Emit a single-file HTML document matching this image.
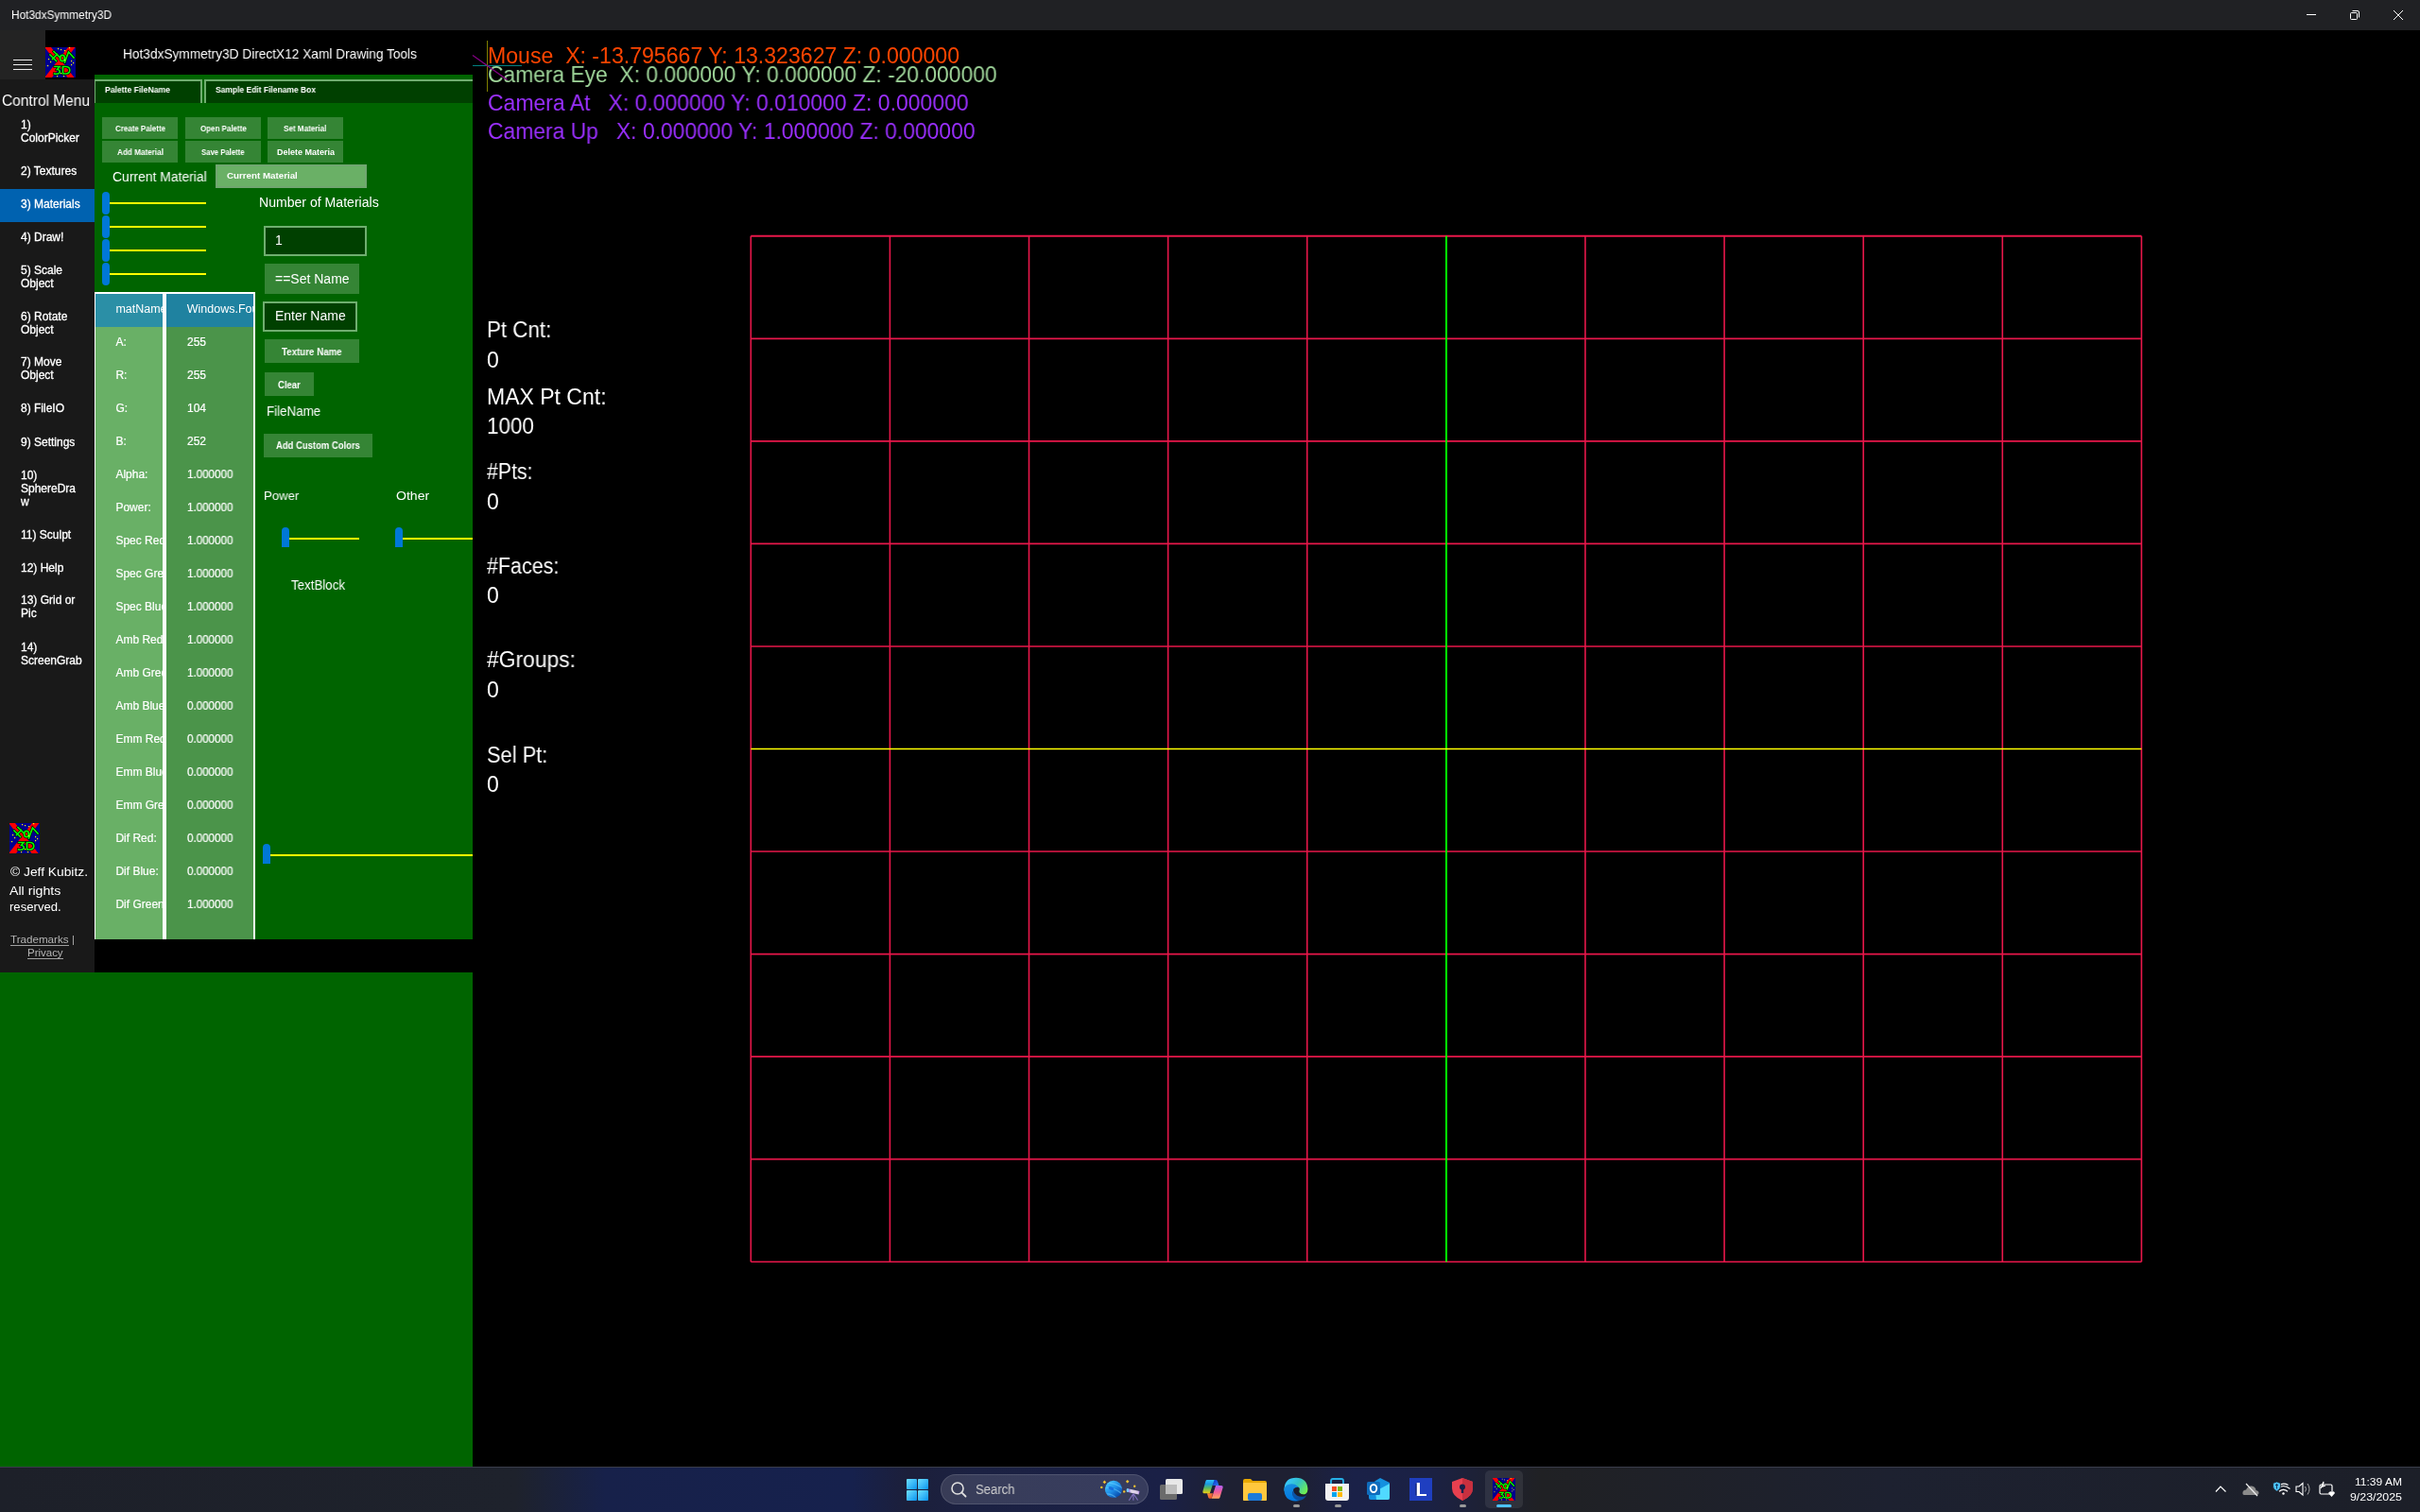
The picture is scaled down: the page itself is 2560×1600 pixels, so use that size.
<!DOCTYPE html>
<html><head><meta charset="utf-8"><title>Hot3dxSymmetry3D</title>
<style>
html,body{margin:0;padding:0;background:#000;width:2560px;height:1600px;overflow:hidden;}
body{position:relative;font-family:"Liberation Sans", sans-serif;}
body div{position:absolute;}
span{display:inline-block;}
.t{will-change:transform;}
</style></head><body>
<div style="left:0px;top:0px;width:2560px;height:32px;background:#202124;"></div>
<div class="t" style="left:12px;top:9.84px;font-size:12px;line-height:12px;color:#ffffff;white-space:pre;transform:scaleX(0.9872);transform-origin:0 0;"><span id="t1">Hot3dxSymmetry3D</span></div>
<svg style="position:absolute;left:2420px;top:0px" width="140" height="32" viewBox="2420 0 140 32">
<path d="M2440 15.5 H2450" stroke="#fff" stroke-width="1"/>
<rect x="2486.5" y="13.5" width="7" height="7" rx="1" fill="none" stroke="#fff" stroke-width="1"/>
<path d="M2488.5 11.5 H2494 Q2495.5 11.5 2495.5 13 V18.5" fill="none" stroke="#fff" stroke-width="1"/>
<path d="M2532 11 L2542 21 M2542 11 L2532 21" stroke="#fff" stroke-width="1"/>
</svg>
<div style="left:0px;top:32px;width:48px;height:52px;background:#232323;"></div>
<div style="left:14px;top:63px;width:20px;height:1.2px;background:#f0f0f0;"></div>
<div style="left:14px;top:68px;width:20px;height:1.2px;background:#f0f0f0;"></div>
<div style="left:14px;top:73px;width:20px;height:1.2px;background:#f0f0f0;"></div>
<svg style="position:absolute;left:48px;top:50px" width="32" height="32" viewBox="0 0 32 32">
<rect width="32" height="32" fill="#000090"/>
<path d="M0 0 H6 L30.5 32 H23.5 L0 1 Z" fill="#ff0000"/>
<path d="M24 0 H31.5 L7 32 H0 V31 Z" fill="#ff0000"/>
<g fill="none" stroke-linecap="square">
<path d="M5 8 L11.5 14.5 M9 4.5 L15 10.5 M7.5 12.5 L12.5 7.5 M21.5 13 L24.5 5 L30 11 M20.5 16 L23 9 M10 20.5 H15 L12.5 23.5 Q16 24 15 27 Q13.5 28.8 9.5 28 M18.5 20.5 V28 H22 Q25.8 27.5 25.8 24.2 Q25.8 20.8 22 20.5 Z" stroke="#000" stroke-width="3"/>
<ellipse cx="18" cy="11.5" rx="2.4" ry="3.2" stroke="#000" stroke-width="3"/>
<path d="M5 8 L11.5 14.5 M9 4.5 L15 10.5 M7.5 12.5 L12.5 7.5 M21.5 13 L24.5 5 L30 11 M20.5 16 L23 9 M10 20.5 H15 L12.5 23.5 Q16 24 15 27 Q13.5 28.8 9.5 28 M18.5 20.5 V28 H22 Q25.8 27.5 25.8 24.2 Q25.8 20.8 22 20.5 Z" stroke="#00ff00" stroke-width="1.7"/>
<ellipse cx="18" cy="11.5" rx="2.4" ry="3.2" stroke="#00ff00" stroke-width="1.7"/>
</g>
<g fill="#ffff00"><rect x="13" y="1" width="1.2" height="1.2"/><rect x="16" y="2" width="1.2" height="1.2"/><rect x="25" y="0" width="1.2" height="1.2"/><rect x="20" y="3" width="1.2" height="1.2"/><rect x="3" y="12" width="1.2" height="1.2"/><rect x="5" y="15" width="1.2" height="1.2"/><rect x="2" y="19" width="1.2" height="1.2"/><rect x="20" y="13" width="1.2" height="1.2"/><rect x="27" y="14" width="1.2" height="1.2"/><rect x="29" y="16" width="1.2" height="1.2"/><rect x="27" y="18" width="1.2" height="1.2"/><rect x="16" y="27" width="1.2" height="1.2"/><rect x="12" y="30" width="1.2" height="1.2"/><rect x="19" y="30" width="1.2" height="1.2"/></g>
</svg>
<div class="t" style="left:130px;top:49.73px;font-size:14.5px;line-height:14.5px;color:#ffffff;white-space:pre;transform:scaleX(0.9443);transform-origin:0 0;"><span id="t2">Hot3dxSymmetry3D DirectX12 Xaml Drawing Tools</span></div>
<div style="left:0px;top:84px;width:100px;height:945px;background:#191919;"></div>
<div class="t" style="left:2px;top:99.46px;font-size:16px;line-height:16px;color:#ffffff;white-space:pre;transform:scaleX(0.9683);transform-origin:0 0;"><span id="t3">Control Menu</span></div>
<div style="left:0px;top:200px;width:100px;height:35px;background:#0062b0;"></div>
<div class="t" style="left:21.5px;top:126.04px;font-size:12px;line-height:12px;color:#ffffff;white-space:pre;-webkit-text-stroke:0.3px #fff;"><span id="t4">1)</span></div>
<div class="t" style="left:21.5px;top:139.94px;font-size:12px;line-height:12px;color:#ffffff;white-space:pre;-webkit-text-stroke:0.3px #fff;"><span id="t5">ColorPicker</span></div>
<div class="t" style="left:21.5px;top:175.14px;font-size:12px;line-height:12px;color:#ffffff;white-space:pre;-webkit-text-stroke:0.3px #fff;"><span id="t6">2) Textures</span></div>
<div class="t" style="left:21.5px;top:210.04px;font-size:12px;line-height:12px;color:#ffffff;white-space:pre;-webkit-text-stroke:0.3px #fff;"><span id="t7">3) Materials</span></div>
<div class="t" style="left:21.5px;top:244.84px;font-size:12px;line-height:12px;color:#ffffff;white-space:pre;-webkit-text-stroke:0.3px #fff;"><span id="t8">4) Draw!</span></div>
<div class="t" style="left:21.5px;top:279.84px;font-size:12px;line-height:12px;color:#ffffff;white-space:pre;-webkit-text-stroke:0.3px #fff;"><span id="t9">5) Scale</span></div>
<div class="t" style="left:21.5px;top:293.74px;font-size:12px;line-height:12px;color:#ffffff;white-space:pre;-webkit-text-stroke:0.3px #fff;"><span id="t10">Object</span></div>
<div class="t" style="left:21.5px;top:328.84px;font-size:12px;line-height:12px;color:#ffffff;white-space:pre;-webkit-text-stroke:0.3px #fff;"><span id="t11">6) Rotate</span></div>
<div class="t" style="left:21.5px;top:342.74px;font-size:12px;line-height:12px;color:#ffffff;white-space:pre;-webkit-text-stroke:0.3px #fff;"><span id="t12">Object</span></div>
<div class="t" style="left:21.5px;top:377.24px;font-size:12px;line-height:12px;color:#ffffff;white-space:pre;-webkit-text-stroke:0.3px #fff;"><span id="t13">7) Move</span></div>
<div class="t" style="left:21.5px;top:391.14px;font-size:12px;line-height:12px;color:#ffffff;white-space:pre;-webkit-text-stroke:0.3px #fff;"><span id="t14">Object</span></div>
<div class="t" style="left:21.5px;top:426.34px;font-size:12px;line-height:12px;color:#ffffff;white-space:pre;-webkit-text-stroke:0.3px #fff;"><span id="t15">8) FileIO</span></div>
<div class="t" style="left:21.5px;top:461.84px;font-size:12px;line-height:12px;color:#ffffff;white-space:pre;-webkit-text-stroke:0.3px #fff;"><span id="t16">9) Settings</span></div>
<div class="t" style="left:21.5px;top:496.74px;font-size:12px;line-height:12px;color:#ffffff;white-space:pre;-webkit-text-stroke:0.3px #fff;"><span id="t17">10)</span></div>
<div class="t" style="left:21.5px;top:510.64px;font-size:12px;line-height:12px;color:#ffffff;white-space:pre;-webkit-text-stroke:0.3px #fff;"><span id="t18">SphereDra</span></div>
<div class="t" style="left:21.5px;top:524.54px;font-size:12px;line-height:12px;color:#ffffff;white-space:pre;-webkit-text-stroke:0.3px #fff;"><span id="t19">w</span></div>
<div class="t" style="left:21.5px;top:559.84px;font-size:12px;line-height:12px;color:#ffffff;white-space:pre;-webkit-text-stroke:0.3px #fff;"><span id="t20">11) Sculpt</span></div>
<div class="t" style="left:21.5px;top:594.74px;font-size:12px;line-height:12px;color:#ffffff;white-space:pre;-webkit-text-stroke:0.3px #fff;"><span id="t21">12) Help</span></div>
<div class="t" style="left:21.5px;top:629.44px;font-size:12px;line-height:12px;color:#ffffff;white-space:pre;-webkit-text-stroke:0.3px #fff;"><span id="t22">13) Grid or</span></div>
<div class="t" style="left:21.5px;top:643.34px;font-size:12px;line-height:12px;color:#ffffff;white-space:pre;-webkit-text-stroke:0.3px #fff;"><span id="t23">Pic</span></div>
<div class="t" style="left:21.5px;top:678.74px;font-size:12px;line-height:12px;color:#ffffff;white-space:pre;-webkit-text-stroke:0.3px #fff;"><span id="t24">14)</span></div>
<div class="t" style="left:21.5px;top:692.64px;font-size:12px;line-height:12px;color:#ffffff;white-space:pre;-webkit-text-stroke:0.3px #fff;"><span id="t25">ScreenGrab</span></div>
<svg style="position:absolute;left:10px;top:871px" width="32" height="32" viewBox="0 0 32 32">
<rect width="32" height="32" fill="#000090"/>
<path d="M0 0 H6 L30.5 32 H23.5 L0 1 Z" fill="#ff0000"/>
<path d="M24 0 H31.5 L7 32 H0 V31 Z" fill="#ff0000"/>
<g fill="none" stroke-linecap="square">
<path d="M5 8 L11.5 14.5 M9 4.5 L15 10.5 M7.5 12.5 L12.5 7.5 M21.5 13 L24.5 5 L30 11 M20.5 16 L23 9 M10 20.5 H15 L12.5 23.5 Q16 24 15 27 Q13.5 28.8 9.5 28 M18.5 20.5 V28 H22 Q25.8 27.5 25.8 24.2 Q25.8 20.8 22 20.5 Z" stroke="#000" stroke-width="3"/>
<ellipse cx="18" cy="11.5" rx="2.4" ry="3.2" stroke="#000" stroke-width="3"/>
<path d="M5 8 L11.5 14.5 M9 4.5 L15 10.5 M7.5 12.5 L12.5 7.5 M21.5 13 L24.5 5 L30 11 M20.5 16 L23 9 M10 20.5 H15 L12.5 23.5 Q16 24 15 27 Q13.5 28.8 9.5 28 M18.5 20.5 V28 H22 Q25.8 27.5 25.8 24.2 Q25.8 20.8 22 20.5 Z" stroke="#00ff00" stroke-width="1.7"/>
<ellipse cx="18" cy="11.5" rx="2.4" ry="3.2" stroke="#00ff00" stroke-width="1.7"/>
</g>
<g fill="#ffff00"><rect x="13" y="1" width="1.2" height="1.2"/><rect x="16" y="2" width="1.2" height="1.2"/><rect x="25" y="0" width="1.2" height="1.2"/><rect x="20" y="3" width="1.2" height="1.2"/><rect x="3" y="12" width="1.2" height="1.2"/><rect x="5" y="15" width="1.2" height="1.2"/><rect x="2" y="19" width="1.2" height="1.2"/><rect x="20" y="13" width="1.2" height="1.2"/><rect x="27" y="14" width="1.2" height="1.2"/><rect x="29" y="16" width="1.2" height="1.2"/><rect x="27" y="18" width="1.2" height="1.2"/><rect x="16" y="27" width="1.2" height="1.2"/><rect x="12" y="30" width="1.2" height="1.2"/><rect x="19" y="30" width="1.2" height="1.2"/></g>
</svg>
<div class="t" style="left:10.6px;top:916.30px;font-size:13px;line-height:13px;color:#ffffff;white-space:pre;transform:scaleX(1.0613);transform-origin:0 0;"><span id="t26">© Jeff Kubitz.</span></div>
<div class="t" style="left:10.3px;top:935.50px;font-size:13px;line-height:13px;color:#ffffff;white-space:pre;transform:scaleX(1.0911);transform-origin:0 0;"><span id="t27">All rights</span></div>
<div class="t" style="left:10.3px;top:953.30px;font-size:13px;line-height:13px;color:#ffffff;white-space:pre;transform:scaleX(1.0092);transform-origin:0 0;"><span id="t28">reserved.</span></div>
<div class="t" style="left:11.2px;top:989.39px;font-size:11px;line-height:11px;color:#b4b4b4;white-space:pre;transform:scaleX(1.0569);transform-origin:0 0;"><span id="t29">Trademarks</span></div>
<div style="left:11px;top:1000.2px;width:62px;height:1px;background:#a0a0a0;"></div>
<div class="t" style="left:75.5px;top:989.39px;font-size:11px;line-height:11px;color:#b4b4b4;white-space:pre;"><span id="t30">|</span></div>
<div class="t" style="left:29.4px;top:1002.69px;font-size:11px;line-height:11px;color:#b4b4b4;white-space:pre;transform:scaleX(1.0426);transform-origin:0 0;"><span id="t31">Privacy</span></div>
<div style="left:29px;top:1014.2px;width:38px;height:1px;background:#a0a0a0;"></div>
<div style="left:100px;top:79px;width:400px;height:915px;background:#006400;"></div>
<div style="left:0px;top:1029px;width:500px;height:523px;background:#006400;"></div>
<div style="left:100px;top:84px;width:114px;height:25px;background:#004000;border-top:2px solid #6fae6f;border-left:1.5px solid #6fae6f;border-right:2px solid #6fae6f;box-sizing:border-box;"></div>
<div class="t" style="left:111px;top:91.38px;font-size:9px;line-height:9px;color:#ffffff;white-space:pre;font-weight:700;transform:scaleX(0.9579);transform-origin:0 0;"><span id="t32">Palette FileName</span></div>
<div style="left:216px;top:84px;width:284px;height:25px;background:#004000;border-top:2px solid #6fae6f;border-left:2px solid #6fae6f;box-sizing:border-box;"></div>
<div class="t" style="left:227.8px;top:91.38px;font-size:9px;line-height:9px;color:#ffffff;white-space:pre;font-weight:700;transform:scaleX(0.9420);transform-origin:0 0;"><span id="t33">Sample Edit Filename Box</span></div>
<div style="left:108px;top:124px;width:80px;height:23px;background:#358535;"></div>
<div style="left:108px;top:149px;width:80px;height:23px;background:#358535;"></div>
<div style="left:196px;top:124px;width:80px;height:23px;background:#358535;"></div>
<div style="left:196px;top:149px;width:80px;height:23px;background:#358535;"></div>
<div style="left:283px;top:124px;width:80px;height:23px;background:#358535;"></div>
<div style="left:283px;top:149px;width:80px;height:23px;background:#358535;"></div>
<div class="t" style="left:121.9px;top:132.00px;font-size:8.5px;line-height:8.5px;color:#ffffff;white-space:pre;font-weight:700;transform:scaleX(0.9347);transform-origin:0 0;"><span id="t34">Create Palette</span></div>
<div class="t" style="left:211.9px;top:131.70px;font-size:8.5px;line-height:8.5px;color:#ffffff;white-space:pre;font-weight:700;transform:scaleX(0.9390);transform-origin:0 0;"><span id="t35">Open Palette</span></div>
<div class="t" style="left:300px;top:131.70px;font-size:8.5px;line-height:8.5px;color:#ffffff;white-space:pre;font-weight:700;transform:scaleX(0.9514);transform-origin:0 0;"><span id="t36">Set Material</span></div>
<div class="t" style="left:124px;top:156.50px;font-size:8.5px;line-height:8.5px;color:#ffffff;white-space:pre;font-weight:700;transform:scaleX(0.9585);transform-origin:0 0;"><span id="t37">Add Material</span></div>
<div class="t" style="left:213px;top:156.60px;font-size:8.5px;line-height:8.5px;color:#ffffff;white-space:pre;font-weight:700;transform:scaleX(0.9103);transform-origin:0 0;"><span id="t38">Save Palette</span></div>
<div class="t" style="left:288px;top:153.28px;width:65.5px;height:19px;overflow:hidden;"><div style="left:5px;top:4px;font-size:9px;line-height:9px;color:#ffffff;white-space:pre;font-weight:700;"><span id="t39">Delete Material</span></div></div>
<div class="t" style="left:119.3px;top:179.75px;font-size:14px;line-height:14px;color:#ffffff;white-space:pre;transform:scaleX(0.9933);transform-origin:0 0;"><span id="t40">Current Material</span></div>
<div style="left:228px;top:174px;width:160px;height:25px;background:#6ab066;border:2px solid #70a670;box-sizing:border-box;"></div>
<div class="t" style="left:240.2px;top:180.96px;font-size:9.5px;line-height:9.5px;color:#ffffff;white-space:pre;font-weight:700;transform:scaleX(1.0266);transform-origin:0 0;"><span id="t41">Current Material</span></div>
<div style="left:116px;top:214px;width:102px;height:2px;background:#ffff00;"></div>
<div style="left:108px;top:203px;width:8px;height:24px;background:#0078d7;border-radius:4px;"></div>
<div style="left:116px;top:239px;width:102px;height:2px;background:#ffff00;"></div>
<div style="left:108px;top:228px;width:8px;height:24px;background:#0078d7;border-radius:4px;"></div>
<div style="left:116px;top:264px;width:102px;height:2px;background:#ffff00;"></div>
<div style="left:108px;top:253px;width:8px;height:24px;background:#0078d7;border-radius:4px;"></div>
<div style="left:116px;top:289px;width:102px;height:2px;background:#ffff00;"></div>
<div style="left:108px;top:278px;width:8px;height:24px;background:#0078d7;border-radius:4px;"></div>
<div class="t" style="left:273.5px;top:206.95px;font-size:14px;line-height:14px;color:#ffffff;white-space:pre;transform:scaleX(1.0052);transform-origin:0 0;"><span id="t42">Number of Materials</span></div>
<div style="left:279px;top:239px;width:109px;height:32px;background:#004000;border:2px solid #6fae6f;box-sizing:border-box;"></div>
<div class="t" style="left:290.7px;top:246.95px;font-size:14px;line-height:14px;color:#ffffff;white-space:pre;"><span id="t43">1</span></div>
<div style="left:280px;top:279px;width:100px;height:32px;background:#358535;"></div>
<div class="t" style="left:290.7px;top:288.15px;font-size:14px;line-height:14px;color:#ffffff;white-space:pre;transform:scaleX(0.9961);transform-origin:0 0;"><span id="t44">==Set Name</span></div>
<div style="left:278px;top:319px;width:100px;height:32px;background:#004000;border:2px solid #6fae6f;box-sizing:border-box;"></div>
<div class="t" style="left:290.7px;top:326.85px;font-size:14px;line-height:14px;color:#ffffff;white-space:pre;transform:scaleX(0.9986);transform-origin:0 0;"><span id="t45">Enter Name</span></div>
<div style="left:280px;top:359px;width:100px;height:25px;background:#358535;"></div>
<div class="t" style="left:298px;top:367.54px;font-size:10px;line-height:10px;color:#ffffff;white-space:pre;font-weight:700;transform:scaleX(0.9724);transform-origin:0 0;"><span id="t46">Texture Name</span></div>
<div style="left:280px;top:394px;width:52px;height:25px;background:#358535;"></div>
<div class="t" style="left:293.9px;top:402.54px;font-size:10px;line-height:10px;color:#ffffff;white-space:pre;font-weight:700;transform:scaleX(0.9514);transform-origin:0 0;"><span id="t47">Clear</span></div>
<div class="t" style="left:282.4px;top:427.85px;font-size:14px;line-height:14px;color:#ffffff;white-space:pre;transform:scaleX(0.9548);transform-origin:0 0;"><span id="t48">FileName</span></div>
<div style="left:279px;top:459px;width:115px;height:25px;background:#358535;"></div>
<div class="t" style="left:292.3px;top:467.24px;font-size:10px;line-height:10px;color:#ffffff;white-space:pre;font-weight:700;transform:scaleX(0.9468);transform-origin:0 0;"><span id="t49">Add Custom Colors</span></div>
<div class="t" style="left:278.6px;top:517.57px;font-size:13.5px;line-height:13.5px;color:#ffffff;white-space:pre;transform:scaleX(0.9774);transform-origin:0 0;"><span id="t50">Power</span></div>
<div class="t" style="left:419.2px;top:518.37px;font-size:13.5px;line-height:13.5px;color:#ffffff;white-space:pre;transform:scaleX(1.0425);transform-origin:0 0;"><span id="t51">Other</span></div>
<div style="left:306px;top:569px;width:74px;height:2px;background:#ffff00;"></div>
<div style="left:298px;top:558px;width:8px;height:21px;background:#0078d7;border-radius:4px 4px 0 0;"></div>
<div style="left:426px;top:569px;width:74px;height:2px;background:#ffff00;"></div>
<div style="left:418px;top:558px;width:8px;height:21px;background:#0078d7;border-radius:4px 4px 0 0;"></div>
<div class="t" style="left:308.3px;top:612.15px;font-size:14px;line-height:14px;color:#ffffff;white-space:pre;transform:scaleX(0.9512);transform-origin:0 0;"><span id="t52">TextBlock</span></div>
<div style="left:286px;top:904px;width:214px;height:2px;background:#ffff00;"></div>
<div style="left:278px;top:893px;width:8px;height:21px;background:#0078d7;border-radius:4px 4px 0 0;"></div>
<div style="left:100px;top:309px;width:170px;height:685px;background:#ffffff;"></div>
<div style="left:101px;top:311px;width:71px;height:35px;background:#2b8fa6;"></div>
<div style="left:176px;top:311px;width:92px;height:35px;background:#1f82a0;"></div>
<div style="left:101px;top:346px;width:71px;height:648px;background:#69b066;"></div>
<div style="left:176px;top:346px;width:92px;height:648px;background:#4b944a;"></div>
<div class="t" style="left:101px;top:317.42px;width:71px;height:22.5px;overflow:hidden;"><div style="left:21.400000000000006px;top:4px;font-size:12.5px;line-height:12.5px;color:#ffffff;white-space:pre;"><span id="t53">matName</span></div></div>
<div class="t" style="left:176px;top:317.42px;width:92px;height:22.5px;overflow:hidden;"><div style="left:21.80000000000001px;top:4px;font-size:12.5px;line-height:12.5px;color:#ffffff;white-space:pre;"><span id="t54">Windows.Foundation.String</span></div></div>
<div class="t" style="left:101px;top:351.54px;width:71px;height:22px;overflow:hidden;"><div style="left:21.400000000000006px;top:4px;font-size:12px;line-height:12px;color:#ffffff;white-space:pre;-webkit-text-stroke:0.2px #fff;"><span id="t55">A:</span></div></div>
<div class="t" style="left:197.8px;top:355.54px;font-size:12px;line-height:12px;color:#ffffff;white-space:pre;-webkit-text-stroke:0.2px #fff;"><span id="t56">255</span></div>
<div class="t" style="left:101px;top:386.54px;width:71px;height:22px;overflow:hidden;"><div style="left:21.400000000000006px;top:4px;font-size:12px;line-height:12px;color:#ffffff;white-space:pre;-webkit-text-stroke:0.2px #fff;"><span id="t57">R:</span></div></div>
<div class="t" style="left:197.8px;top:390.54px;font-size:12px;line-height:12px;color:#ffffff;white-space:pre;-webkit-text-stroke:0.2px #fff;"><span id="t58">255</span></div>
<div class="t" style="left:101px;top:421.54px;width:71px;height:22px;overflow:hidden;"><div style="left:21.400000000000006px;top:4px;font-size:12px;line-height:12px;color:#ffffff;white-space:pre;-webkit-text-stroke:0.2px #fff;"><span id="t59">G:</span></div></div>
<div class="t" style="left:197.8px;top:425.54px;font-size:12px;line-height:12px;color:#ffffff;white-space:pre;-webkit-text-stroke:0.2px #fff;"><span id="t60">104</span></div>
<div class="t" style="left:101px;top:456.54px;width:71px;height:22px;overflow:hidden;"><div style="left:21.400000000000006px;top:4px;font-size:12px;line-height:12px;color:#ffffff;white-space:pre;-webkit-text-stroke:0.2px #fff;"><span id="t61">B:</span></div></div>
<div class="t" style="left:197.8px;top:460.54px;font-size:12px;line-height:12px;color:#ffffff;white-space:pre;-webkit-text-stroke:0.2px #fff;"><span id="t62">252</span></div>
<div class="t" style="left:101px;top:491.54px;width:71px;height:22px;overflow:hidden;"><div style="left:21.400000000000006px;top:4px;font-size:12px;line-height:12px;color:#ffffff;white-space:pre;-webkit-text-stroke:0.2px #fff;"><span id="t63">Alpha:</span></div></div>
<div class="t" style="left:197.8px;top:495.54px;font-size:12px;line-height:12px;color:#ffffff;white-space:pre;transform:scaleX(0.9668);transform-origin:0 0;-webkit-text-stroke:0.2px #fff;"><span id="t64">1.000000</span></div>
<div class="t" style="left:101px;top:526.54px;width:71px;height:22px;overflow:hidden;"><div style="left:21.400000000000006px;top:4px;font-size:12px;line-height:12px;color:#ffffff;white-space:pre;-webkit-text-stroke:0.2px #fff;"><span id="t65">Power:</span></div></div>
<div class="t" style="left:197.8px;top:530.54px;font-size:12px;line-height:12px;color:#ffffff;white-space:pre;transform:scaleX(0.9668);transform-origin:0 0;-webkit-text-stroke:0.2px #fff;"><span id="t66">1.000000</span></div>
<div class="t" style="left:101px;top:561.54px;width:71px;height:22px;overflow:hidden;"><div style="left:21.400000000000006px;top:4px;font-size:12px;line-height:12px;color:#ffffff;white-space:pre;-webkit-text-stroke:0.2px #fff;"><span id="t67">Spec Red:</span></div></div>
<div class="t" style="left:197.8px;top:565.54px;font-size:12px;line-height:12px;color:#ffffff;white-space:pre;transform:scaleX(0.9668);transform-origin:0 0;-webkit-text-stroke:0.2px #fff;"><span id="t68">1.000000</span></div>
<div class="t" style="left:101px;top:596.54px;width:71px;height:22px;overflow:hidden;"><div style="left:21.400000000000006px;top:4px;font-size:12px;line-height:12px;color:#ffffff;white-space:pre;-webkit-text-stroke:0.2px #fff;"><span id="t69">Spec Green:</span></div></div>
<div class="t" style="left:197.8px;top:600.54px;font-size:12px;line-height:12px;color:#ffffff;white-space:pre;transform:scaleX(0.9668);transform-origin:0 0;-webkit-text-stroke:0.2px #fff;"><span id="t70">1.000000</span></div>
<div class="t" style="left:101px;top:631.54px;width:71px;height:22px;overflow:hidden;"><div style="left:21.400000000000006px;top:4px;font-size:12px;line-height:12px;color:#ffffff;white-space:pre;-webkit-text-stroke:0.2px #fff;"><span id="t71">Spec Blue:</span></div></div>
<div class="t" style="left:197.8px;top:635.54px;font-size:12px;line-height:12px;color:#ffffff;white-space:pre;transform:scaleX(0.9668);transform-origin:0 0;-webkit-text-stroke:0.2px #fff;"><span id="t72">1.000000</span></div>
<div class="t" style="left:101px;top:666.54px;width:71px;height:22px;overflow:hidden;"><div style="left:21.400000000000006px;top:4px;font-size:12px;line-height:12px;color:#ffffff;white-space:pre;-webkit-text-stroke:0.2px #fff;"><span id="t73">Amb Red:</span></div></div>
<div class="t" style="left:197.8px;top:670.54px;font-size:12px;line-height:12px;color:#ffffff;white-space:pre;transform:scaleX(0.9668);transform-origin:0 0;-webkit-text-stroke:0.2px #fff;"><span id="t74">1.000000</span></div>
<div class="t" style="left:101px;top:701.54px;width:71px;height:22px;overflow:hidden;"><div style="left:21.400000000000006px;top:4px;font-size:12px;line-height:12px;color:#ffffff;white-space:pre;-webkit-text-stroke:0.2px #fff;"><span id="t75">Amb Green:</span></div></div>
<div class="t" style="left:197.8px;top:705.54px;font-size:12px;line-height:12px;color:#ffffff;white-space:pre;transform:scaleX(0.9668);transform-origin:0 0;-webkit-text-stroke:0.2px #fff;"><span id="t76">1.000000</span></div>
<div class="t" style="left:101px;top:736.54px;width:71px;height:22px;overflow:hidden;"><div style="left:21.400000000000006px;top:4px;font-size:12px;line-height:12px;color:#ffffff;white-space:pre;-webkit-text-stroke:0.2px #fff;"><span id="t77">Amb Blue:</span></div></div>
<div class="t" style="left:197.8px;top:740.54px;font-size:12px;line-height:12px;color:#ffffff;white-space:pre;transform:scaleX(0.9668);transform-origin:0 0;-webkit-text-stroke:0.2px #fff;"><span id="t78">0.000000</span></div>
<div class="t" style="left:101px;top:771.54px;width:71px;height:22px;overflow:hidden;"><div style="left:21.400000000000006px;top:4px;font-size:12px;line-height:12px;color:#ffffff;white-space:pre;-webkit-text-stroke:0.2px #fff;"><span id="t79">Emm Red:</span></div></div>
<div class="t" style="left:197.8px;top:775.54px;font-size:12px;line-height:12px;color:#ffffff;white-space:pre;transform:scaleX(0.9668);transform-origin:0 0;-webkit-text-stroke:0.2px #fff;"><span id="t80">0.000000</span></div>
<div class="t" style="left:101px;top:806.54px;width:71px;height:22px;overflow:hidden;"><div style="left:21.400000000000006px;top:4px;font-size:12px;line-height:12px;color:#ffffff;white-space:pre;-webkit-text-stroke:0.2px #fff;"><span id="t81">Emm Blue:</span></div></div>
<div class="t" style="left:197.8px;top:810.54px;font-size:12px;line-height:12px;color:#ffffff;white-space:pre;transform:scaleX(0.9668);transform-origin:0 0;-webkit-text-stroke:0.2px #fff;"><span id="t82">0.000000</span></div>
<div class="t" style="left:101px;top:841.54px;width:71px;height:22px;overflow:hidden;"><div style="left:21.400000000000006px;top:4px;font-size:12px;line-height:12px;color:#ffffff;white-space:pre;-webkit-text-stroke:0.2px #fff;"><span id="t83">Emm Green:</span></div></div>
<div class="t" style="left:197.8px;top:845.54px;font-size:12px;line-height:12px;color:#ffffff;white-space:pre;transform:scaleX(0.9668);transform-origin:0 0;-webkit-text-stroke:0.2px #fff;"><span id="t84">0.000000</span></div>
<div class="t" style="left:101px;top:876.54px;width:71px;height:22px;overflow:hidden;"><div style="left:21.400000000000006px;top:4px;font-size:12px;line-height:12px;color:#ffffff;white-space:pre;-webkit-text-stroke:0.2px #fff;"><span id="t85">Dif Red:</span></div></div>
<div class="t" style="left:197.8px;top:880.54px;font-size:12px;line-height:12px;color:#ffffff;white-space:pre;transform:scaleX(0.9668);transform-origin:0 0;-webkit-text-stroke:0.2px #fff;"><span id="t86">0.000000</span></div>
<div class="t" style="left:101px;top:911.54px;width:71px;height:22px;overflow:hidden;"><div style="left:21.400000000000006px;top:4px;font-size:12px;line-height:12px;color:#ffffff;white-space:pre;-webkit-text-stroke:0.2px #fff;"><span id="t87">Dif Blue:</span></div></div>
<div class="t" style="left:197.8px;top:915.54px;font-size:12px;line-height:12px;color:#ffffff;white-space:pre;transform:scaleX(0.9668);transform-origin:0 0;-webkit-text-stroke:0.2px #fff;"><span id="t88">0.000000</span></div>
<div class="t" style="left:101px;top:946.54px;width:71px;height:22px;overflow:hidden;"><div style="left:21.400000000000006px;top:4px;font-size:12px;line-height:12px;color:#ffffff;white-space:pre;-webkit-text-stroke:0.2px #fff;"><span id="t89">Dif Green:</span></div></div>
<div class="t" style="left:197.8px;top:950.54px;font-size:12px;line-height:12px;color:#ffffff;white-space:pre;transform:scaleX(0.9668);transform-origin:0 0;-webkit-text-stroke:0.2px #fff;"><span id="t90">1.000000</span></div>
<div class="t" style="left:516px;top:48.23px;font-size:23px;line-height:23px;color:#ff4500;white-space:pre;transform:scaleX(1.0040);transform-origin:0 0;"><span id="t91">Mouse  X: -13.795667 Y: 13.323627 Z: 0.000000</span></div>
<div class="t" style="left:515.5px;top:68.33px;font-size:23px;line-height:23px;color:#9fd69a;white-space:pre;transform:scaleX(0.9917);transform-origin:0 0;"><span id="t92">Camera Eye  X: 0.000000 Y: 0.000000 Z: -20.000000</span></div>
<div class="t" style="left:515.5px;top:98.23px;font-size:23px;line-height:23px;color:#9b30ff;white-space:pre;transform:scaleX(0.9975);transform-origin:0 0;"><span id="t93">Camera At   X: 0.000000 Y: 0.010000 Z: 0.000000</span></div>
<div class="t" style="left:515.5px;top:128.03px;font-size:23px;line-height:23px;color:#9b30ff;white-space:pre;transform:scaleX(0.9938);transform-origin:0 0;"><span id="t94">Camera Up   X: 0.000000 Y: 1.000000 Z: 0.000000</span></div>
<svg style="position:absolute;left:495px;top:38px" width="70" height="62" viewBox="495 38 70 62">
<path d="M515.5 43 V97" stroke="#808000" stroke-width="1"/>
<path d="M500 69.5 H552" stroke="#008080" stroke-width="1.2"/>
<path d="M500 58.5 L536.6 84.5" stroke="#800080" stroke-width="1.5"/>
</svg>
<div class="t" style="left:515px;top:338.33px;font-size:23px;line-height:23px;color:#ffffff;white-space:pre;transform:scaleX(0.9714);transform-origin:0 0;"><span id="t95">Pt Cnt:</span></div>
<div class="t" style="left:515px;top:369.53px;font-size:23px;line-height:23px;color:#ffffff;white-space:pre;"><span id="t96">0</span></div>
<div class="t" style="left:515px;top:408.53px;font-size:23px;line-height:23px;color:#ffffff;white-space:pre;transform:scaleX(0.9980);transform-origin:0 0;"><span id="t97">MAX Pt Cnt:</span></div>
<div class="t" style="left:515px;top:439.93px;font-size:23px;line-height:23px;color:#ffffff;white-space:pre;transform:scaleX(0.9771);transform-origin:0 0;"><span id="t98">1000</span></div>
<div class="t" style="left:515px;top:487.83px;font-size:23px;line-height:23px;color:#ffffff;white-space:pre;transform:scaleX(0.9252);transform-origin:0 0;"><span id="t99">#Pts:</span></div>
<div class="t" style="left:515px;top:519.53px;font-size:23px;line-height:23px;color:#ffffff;white-space:pre;"><span id="t100">0</span></div>
<div class="t" style="left:515px;top:587.93px;font-size:23px;line-height:23px;color:#ffffff;white-space:pre;transform:scaleX(0.9324);transform-origin:0 0;"><span id="t101">#Faces:</span></div>
<div class="t" style="left:515px;top:619.43px;font-size:23px;line-height:23px;color:#ffffff;white-space:pre;"><span id="t102">0</span></div>
<div class="t" style="left:515px;top:687.43px;font-size:23px;line-height:23px;color:#ffffff;white-space:pre;transform:scaleX(0.9925);transform-origin:0 0;"><span id="t103">#Groups:</span></div>
<div class="t" style="left:515px;top:719.43px;font-size:23px;line-height:23px;color:#ffffff;white-space:pre;"><span id="t104">0</span></div>
<div class="t" style="left:515px;top:787.93px;font-size:23px;line-height:23px;color:#ffffff;white-space:pre;transform:scaleX(0.9489);transform-origin:0 0;"><span id="t105">Sel Pt:</span></div>
<div class="t" style="left:515px;top:818.83px;font-size:23px;line-height:23px;color:#ffffff;white-space:pre;"><span id="t106">0</span></div>
<svg style="position:absolute;left:0;top:0" width="2560" height="1600"><line x1="794.30" y1="249.8" x2="794.30" y2="1335.2" stroke="#e8174a" stroke-width="1.6"/><line x1="941.41" y1="249.8" x2="941.41" y2="1335.2" stroke="#e8174a" stroke-width="1.6"/><line x1="1088.52" y1="249.8" x2="1088.52" y2="1335.2" stroke="#e8174a" stroke-width="1.6"/><line x1="1235.63" y1="249.8" x2="1235.63" y2="1335.2" stroke="#e8174a" stroke-width="1.6"/><line x1="1382.74" y1="249.8" x2="1382.74" y2="1335.2" stroke="#e8174a" stroke-width="1.6"/><line x1="1676.96" y1="249.8" x2="1676.96" y2="1335.2" stroke="#e8174a" stroke-width="1.6"/><line x1="1824.07" y1="249.8" x2="1824.07" y2="1335.2" stroke="#e8174a" stroke-width="1.6"/><line x1="1971.18" y1="249.8" x2="1971.18" y2="1335.2" stroke="#e8174a" stroke-width="1.6"/><line x1="2118.29" y1="249.8" x2="2118.29" y2="1335.2" stroke="#e8174a" stroke-width="1.6"/><line x1="2265.40" y1="249.8" x2="2265.40" y2="1335.2" stroke="#e8174a" stroke-width="1.6"/><line x1="794.3" y1="249.80" x2="2265.4" y2="249.80" stroke="#e8174a" stroke-width="2"/><line x1="794.3" y1="358.34" x2="2265.4" y2="358.34" stroke="#e8174a" stroke-width="1.6"/><line x1="794.3" y1="466.88" x2="2265.4" y2="466.88" stroke="#e8174a" stroke-width="1.6"/><line x1="794.3" y1="575.42" x2="2265.4" y2="575.42" stroke="#e8174a" stroke-width="1.6"/><line x1="794.3" y1="683.96" x2="2265.4" y2="683.96" stroke="#e8174a" stroke-width="1.6"/><line x1="794.3" y1="901.04" x2="2265.4" y2="901.04" stroke="#e8174a" stroke-width="1.6"/><line x1="794.3" y1="1009.58" x2="2265.4" y2="1009.58" stroke="#e8174a" stroke-width="1.6"/><line x1="794.3" y1="1118.12" x2="2265.4" y2="1118.12" stroke="#e8174a" stroke-width="1.6"/><line x1="794.3" y1="1226.66" x2="2265.4" y2="1226.66" stroke="#e8174a" stroke-width="1.6"/><line x1="794.3" y1="1335.20" x2="2265.4" y2="1335.20" stroke="#e8174a" stroke-width="1.6"/><line x1="1530" y1="249.8" x2="1530" y2="1335.2" stroke="#00ff00" stroke-width="2"/><line x1="794.3" y1="792.50" x2="2265.4" y2="792.50" stroke="#ffff00" stroke-width="1.4"/></svg>
<div style="left:0;top:1552px;width:2560px;height:48px;background:linear-gradient(90deg,#1d2029 0.0%,#1e222c 21.3%,#17214a 25.0%,#16214d 35.2%,#1c1f3a 37.5%,#1b2142 40.2%,#1a2046 48.0%,#1e2032 50.8%,#1e2032 53.5%,#1a2148 55.9%,#1b2144 59.0%,#202124 63.7%,#1d2130 78.1%,#1c1f28 100.0%);border-top:1px solid #3a3d4a;box-sizing:border-box;"></div>
<svg style="position:absolute;left:958px;top:1564px" width="25" height="25" viewBox="0 0 25 25">
<defs><linearGradient id="wg" x1="0" y1="0" x2="1" y2="1"><stop offset="0" stop-color="#6ee0ff"/><stop offset="1" stop-color="#0a94f0"/></linearGradient></defs>
<rect x="1" y="1" width="11" height="11" rx="1" fill="url(#wg)"/><rect x="13" y="1" width="11" height="11" rx="1" fill="url(#wg)"/>
<rect x="1" y="13" width="11" height="11" rx="1" fill="url(#wg)"/><rect x="13" y="13" width="11" height="11" rx="1" fill="url(#wg)"/>
</svg>
<div style="left:995px;top:1560px;width:220px;height:32px;background:rgba(255,255,255,0.13);border-radius:16px;border:1px solid rgba(255,255,255,0.12);box-sizing:border-box;"></div>
<svg style="position:absolute;left:1004px;top:1566px" width="22" height="22" viewBox="0 0 22 22">
<circle cx="9" cy="9" r="6" fill="none" stroke="#e0e0e0" stroke-width="1.6"/><path d="M13.3 13.3 L17.5 17.5" stroke="#e0e0e0" stroke-width="1.8" stroke-linecap="round"/></svg>
<div class="t" style="left:1032px;top:1569.15px;font-size:14px;line-height:14px;color:#d0d0d0;white-space:pre;transform:scaleX(0.9355);transform-origin:0 0;"><span id="t107">Search</span></div>
<svg style="position:absolute;left:1160px;top:1562px" width="50" height="30" viewBox="0 0 50 30">
<defs><linearGradient id="pl1" x1="0.15" y1="0.1" x2="0.85" y2="0.9"><stop offset="0" stop-color="#40c4ff"/><stop offset="0.5" stop-color="#1f8ee8"/><stop offset="1" stop-color="#0646a8"/></linearGradient>
<clipPath id="plc"><circle cx="18" cy="13.9" r="9.1"/></clipPath>
<linearGradient id="tl1" x1="0" y1="0" x2="1" y2="0"><stop offset="0" stop-color="#70c8f8"/><stop offset="0.15" stop-color="#a080e8"/><stop offset="0.35" stop-color="#e4dcec"/><stop offset="0.85" stop-color="#d8c8e8"/><stop offset="1" stop-color="#a070e0"/></linearGradient></defs>
<circle cx="18" cy="13.9" r="9.1" fill="url(#pl1)"/>
<g clip-path="url(#plc)" fill="none" stroke="#6cd0ff" stroke-opacity="0.55" stroke-width="1.1">
<path d="M8 7 Q18 6 28 13"/><path d="M8 12.5 Q18 11 27 19"/><path d="M10 19 Q16 18 22 24"/></g>
<ellipse cx="15.5" cy="13" rx="3" ry="1.6" fill="#1060d8" opacity="0.8" transform="rotate(20 15.5 13)"/>
<path d="M33 13.2 L45.5 16 L44.7 19.5 L32.2 16.7 Z" fill="url(#tl1)"/>
<ellipse cx="32.8" cy="15" rx="1.2" ry="2" fill="#78d0ff"/>
<path d="M38.9 18.5 L34.3 25.7 M38.9 18.5 L38.9 25.7 M38.9 18.5 L43.6 25.5" stroke="#8070c0" stroke-width="1.1"/>
<g fill="#f4c430"><path d="M8.4 4.6 L9.3 5.5 L10.2 6.4 L9.3 7.3 L8.4 8.2 L7.5 7.3 L6.6 6.4 L7.5 5.5 Z"/>
<circle cx="5.3" cy="11.9" r="1.2"/><path d="M32.7 3.9 L34.5 5.7 L32.7 7.5 L30.9 5.7 Z"/><circle cx="40.2" cy="10.7" r="1.2"/><circle cx="29.2" cy="16.4" r="1.2"/></g>
</svg>
<svg style="position:absolute;left:1226px;top:1564px" width="26" height="24" viewBox="0 0 26 24">
<rect x="1" y="7" width="18" height="16" rx="1.5" fill="#6b6b6b"/><rect x="7" y="1" width="18" height="16" rx="1.5" fill="#e8e8e8"/>
<rect x="7" y="7" width="12" height="10" fill="#bdbdbd"/></svg>
<svg style="position:absolute;left:1271px;top:1565px" width="24" height="23" viewBox="0 0 24 23">
<defs><linearGradient id="cp1" x1="0" y1="0" x2="0" y2="1"><stop offset="0" stop-color="#30c0ff"/><stop offset="0.3" stop-color="#1a98e0"/><stop offset="0.6" stop-color="#58b860"/><stop offset="1" stop-color="#f0d010"/></linearGradient>
<linearGradient id="cp2" x1="0" y1="0" x2="0" y2="1"><stop offset="0" stop-color="#b060f4"/><stop offset="0.5" stop-color="#f05a98"/><stop offset="1" stop-color="#ffa85a"/></linearGradient>
<linearGradient id="cp3" x1="0" y1="0" x2="1" y2="1"><stop offset="0" stop-color="#0830c8"/><stop offset="1" stop-color="#3080f0"/></linearGradient>
<linearGradient id="cp4" x1="0" y1="0" x2="1" y2="1"><stop offset="0" stop-color="#ff9a40"/><stop offset="1" stop-color="#e03a2a"/></linearGradient></defs>
<path d="M12.6 1.1 H15.5 Q16.6 1.1 17 2.6 L18.4 6.9 H12 Z" fill="url(#cp3)"/>
<path d="M6 15.3 H12 L10.7 20.8 H8.6 Q7.6 20.8 7.2 19.5 Z" fill="url(#cp4)"/>
<path d="M5.6 1.1 H13.6 L8.8 15.3 H3.2 Q1 15.3 1.4 13 L4.2 3 Q4.7 1.1 5.6 1.1 Z" fill="url(#cp1)"/>
<path d="M15.1 6.9 H20.8 Q23 6.9 22.6 9.2 L19.6 19.2 Q19.2 20.8 18 20.8 H10.7 Z" fill="url(#cp2)"/>
</svg>
<svg style="position:absolute;left:1315px;top:1565px" width="25" height="23" viewBox="0 0 25 23">
<path d="M0 2 Q0 0 2 0 H8 L10 2 H23 Q25 2 25 4 V21 Q25 23 23 23 H2 Q0 23 0 21 Z" fill="#e8a800"/>
<rect x="0" y="4" width="25" height="19" rx="1" fill="#ffc83d"/>
<rect x="5" y="15" width="15" height="8" rx="2" fill="#1e7ad8"/></svg>
<svg style="position:absolute;left:1358px;top:1563px" width="26" height="26" viewBox="0 0 26 26">
<defs><linearGradient id="eg1" x1="0.1" y1="0.2" x2="1" y2="0.7"><stop offset="0" stop-color="#38c8ff"/><stop offset="0.45" stop-color="#32c0c8"/><stop offset="1" stop-color="#70f050"/></linearGradient>
<linearGradient id="eg2" x1="0" y1="0" x2="0.3" y2="1"><stop offset="0" stop-color="#1a90e0"/><stop offset="1" stop-color="#0078e0"/></linearGradient>
<linearGradient id="eg3" x1="0" y1="0" x2="1" y2="1"><stop offset="0" stop-color="#0c5ab0"/><stop offset="1" stop-color="#0a4a98"/></linearGradient></defs>
<path d="M0.5 12 Q1.5 0.8 13 0.8 Q24.5 1 25.4 12 Q25.6 17 22.5 18.2 Q20 19 17 17.5 Q15.5 16.5 16.5 14 Q17.5 11 14 10.3 Q10 9.8 6 11 Q2.5 12 0.5 15 Z" fill="url(#eg1)"/>
<path d="M0.5 13 Q1 9 5.5 7.7 Q11 6.5 14.5 9.5 Q16.5 11.3 16.2 13 Q12.5 11.3 10.5 13.8 Q8.5 16.5 10 20 Q12 24 17.5 24.8 Q15.5 25.6 12.5 25.6 Q0.5 25 0.5 13 Z" fill="url(#eg2)"/>
<path d="M10.5 13.8 Q12.5 11.3 16.2 13 Q15 14.5 15.5 16.3 Q17 19.6 21 19.5 Q23.5 19.4 24.7 18 Q23 22.5 19 24.3 Q15.5 25.5 12.5 23.5 Q9 21 9.2 17.5 Q9.4 15.2 10.5 13.8 Z" fill="url(#eg3)"/>
<path d="M10.3 12.8 Q12.5 10.2 15.3 10.8 Q17 11.5 16.4 13.6 Q15.8 15.3 16.6 16.6 Q18.5 19 22.5 18.6 Q24 18.4 25 17.4 Q24 20 21.5 20.6 Q17 21.3 13.8 19.4 Q10.6 17.5 10.3 14.5 Z" fill="#1c1e2c"/>
</svg>
<div style="left:1367.5px;top:1592px;width:7px;height:3px;background:#9a9a9a;border-radius:2px;"></div>
<svg style="position:absolute;left:1402px;top:1564px" width="25" height="25" viewBox="0 0 25 25">
<path d="M6 7 V3 Q6 1 8 1 H17 Q19 1 19 3 V7" fill="none" stroke="#26b0e8" stroke-width="1.8"/>
<path d="M0 6 H25 V21 Q25 24 22 24 H3 Q0 24 0 21 Z" fill="#f2f2f2"/>
<rect x="7" y="9" width="5" height="5" fill="#f25022"/><rect x="13" y="9" width="5" height="5" fill="#7fba00"/>
<rect x="7" y="15" width="5" height="5" fill="#00a4ef"/><rect x="13" y="15" width="5" height="5" fill="#ffb900"/></svg>
<div style="left:1411.8px;top:1592px;width:7px;height:3px;background:#9a9a9a;border-radius:2px;"></div>
<svg style="position:absolute;left:1446px;top:1564px" width="26" height="24" viewBox="0 0 26 24">
<path d="M9 3 L14 0 L24 5 V21 Q24 23 22 23 H4 Q2 23 2 21 V10 Z" fill="#1490df"/>
<path d="M9 14 L24 6 V21 Q24 23 22 23 H10 Z" fill="#50d9ff"/>
<rect x="0" y="4" width="14" height="14" rx="1.5" fill="#0f6cbd"/>
<ellipse cx="7" cy="11" rx="3.3" ry="4" fill="none" stroke="#fff" stroke-width="1.8"/></svg>
<svg style="position:absolute;left:1491px;top:1564px" width="24" height="24" viewBox="0 0 24 24">
<rect width="24" height="24" fill="#1f3fc0"/><path d="M7.5 5 H11 V17 H18 V19 H7.5 Z" fill="#fff"/><path d="M7.5 19 L6.5 18 V6 L7.5 5 Z" fill="#0a1a60"/></svg>
<svg style="position:absolute;left:1535px;top:1564px" width="24" height="24" viewBox="0 0 24 24">
<path d="M12 0 L23 4 V11 Q23 19 12 24 Q1 19 1 11 V4 Z" fill="#e8404f"/><path d="M12 0 L23 4 V11 Q23 19 12 24 Z" fill="#c8303f"/>
<circle cx="12" cy="9.5" r="3" fill="#16204a"/><rect x="10.8" y="10" width="2.4" height="6" fill="#16204a"/></svg>
<div style="left:1543.6px;top:1592px;width:7px;height:3px;background:#9a9a9a;border-radius:2px;"></div>
<div style="left:1571px;top:1556px;width:40px;height:39.5px;background:rgba(255,255,255,0.08);border-radius:5px;"></div>
<svg style="position:absolute;left:1579px;top:1564px" width="24" height="24" viewBox="0 0 32 32">
<rect width="32" height="32" fill="#000090"/>
<path d="M0 0 H6 L30.5 32 H23.5 L0 1 Z" fill="#ff0000"/>
<path d="M24 0 H31.5 L7 32 H0 V31 Z" fill="#ff0000"/>
<g fill="none" stroke-linecap="square">
<path d="M5 8 L11.5 14.5 M9 4.5 L15 10.5 M7.5 12.5 L12.5 7.5 M21.5 13 L24.5 5 L30 11 M20.5 16 L23 9 M10 20.5 H15 L12.5 23.5 Q16 24 15 27 Q13.5 28.8 9.5 28 M18.5 20.5 V28 H22 Q25.8 27.5 25.8 24.2 Q25.8 20.8 22 20.5 Z" stroke="#000" stroke-width="3"/>
<ellipse cx="18" cy="11.5" rx="2.4" ry="3.2" stroke="#000" stroke-width="3"/>
<path d="M5 8 L11.5 14.5 M9 4.5 L15 10.5 M7.5 12.5 L12.5 7.5 M21.5 13 L24.5 5 L30 11 M20.5 16 L23 9 M10 20.5 H15 L12.5 23.5 Q16 24 15 27 Q13.5 28.8 9.5 28 M18.5 20.5 V28 H22 Q25.8 27.5 25.8 24.2 Q25.8 20.8 22 20.5 Z" stroke="#00ff00" stroke-width="1.7"/>
<ellipse cx="18" cy="11.5" rx="2.4" ry="3.2" stroke="#00ff00" stroke-width="1.7"/>
</g>
<g fill="#ffff00"><rect x="13" y="1" width="1.2" height="1.2"/><rect x="16" y="2" width="1.2" height="1.2"/><rect x="25" y="0" width="1.2" height="1.2"/><rect x="20" y="3" width="1.2" height="1.2"/><rect x="3" y="12" width="1.2" height="1.2"/><rect x="5" y="15" width="1.2" height="1.2"/><rect x="2" y="19" width="1.2" height="1.2"/><rect x="20" y="13" width="1.2" height="1.2"/><rect x="27" y="14" width="1.2" height="1.2"/><rect x="29" y="16" width="1.2" height="1.2"/><rect x="27" y="18" width="1.2" height="1.2"/><rect x="16" y="27" width="1.2" height="1.2"/><rect x="12" y="30" width="1.2" height="1.2"/><rect x="19" y="30" width="1.2" height="1.2"/></g>
</svg>
<div style="left:1583px;top:1592px;width:16px;height:3px;background:#4cc2ff;border-radius:2px;"></div>
<svg style="position:absolute;left:2336px;top:1562px" width="140" height="28" viewBox="2336 1562 140 28">
<path d="M2344 1578.5 L2349 1573 L2354.5 1578.5" fill="none" stroke="#fff" stroke-width="1.2"/>
<path d="M2374 1582 Q2372 1582 2372.5 1579 Q2373 1576.5 2376 1576.5 Q2378 1572 2382 1572.5 Q2386 1573 2386.5 1577 Q2389.5 1577.5 2389.5 1580 Q2389.5 1582 2387 1582 Z" fill="#8a8a8a"/>
<path d="M2376 1570 L2388 1583" stroke="#eee" stroke-width="1.2"/>
<path d="M2411 1578.2 Q2415.5 1574.5 2420 1578.2 M2408.5 1575.5 Q2415.5 1569.5 2422.5 1575.5 M2410.5 1572 Q2415.5 1568.5 2420.5 1571.5" fill="none" stroke="#fff" stroke-width="1.2"/>
<circle cx="2415.5" cy="1580.5" r="1.2" fill="#fff"/>
<path d="M2404.5 1569.5 L2408.5 1568 L2412.5 1569.5 V1573 Q2412.5 1576 2408.5 1578 Q2404.5 1576 2404.5 1573 Z" fill="#4cc2ff" stroke="#1c1f28" stroke-width="0.8"/>
<path d="M2408.5 1575.5 V1570.5 M2407 1572 L2408.5 1570.5 L2410 1572" stroke="#0a2a50" stroke-width="0.9" fill="none"/>
<path d="M2429 1573 H2432 L2436 1569.5 V1582 L2432 1578.5 H2429 Z" fill="none" stroke="#fff" stroke-width="1.1"/>
<path d="M2438.5 1573 Q2440.5 1575.8 2438.5 1578.5 M2441 1570 Q2445 1575.8 2441 1581.5" fill="none" stroke="#aaa" stroke-width="1"/>
<rect x="2454" y="1571" width="13" height="10" rx="1.5" fill="none" stroke="#fff" stroke-width="1.2"/>
<path d="M2455 1575 L2458 1568 L2457 1573 L2460 1572" fill="none" stroke="#fff" stroke-width="1.2"/>
<path d="M2463 1580 Q2465 1577 2467 1579 Q2469 1577 2470 1580 L2466.5 1584 Z" fill="#fff"/>
</svg>
<div class="t" style="left:2490.6px;top:1563.27px;font-size:11.5px;line-height:11.5px;color:#ffffff;white-space:pre;transform:scaleX(1.0471);transform-origin:0 0;"><span id="t108">11:39 AM</span></div>
<div class="t" style="left:2485.7px;top:1578.77px;font-size:11.5px;line-height:11.5px;color:#ffffff;white-space:pre;transform:scaleX(1.0748);transform-origin:0 0;"><span id="t109">9/23/2025</span></div>
</body></html>
